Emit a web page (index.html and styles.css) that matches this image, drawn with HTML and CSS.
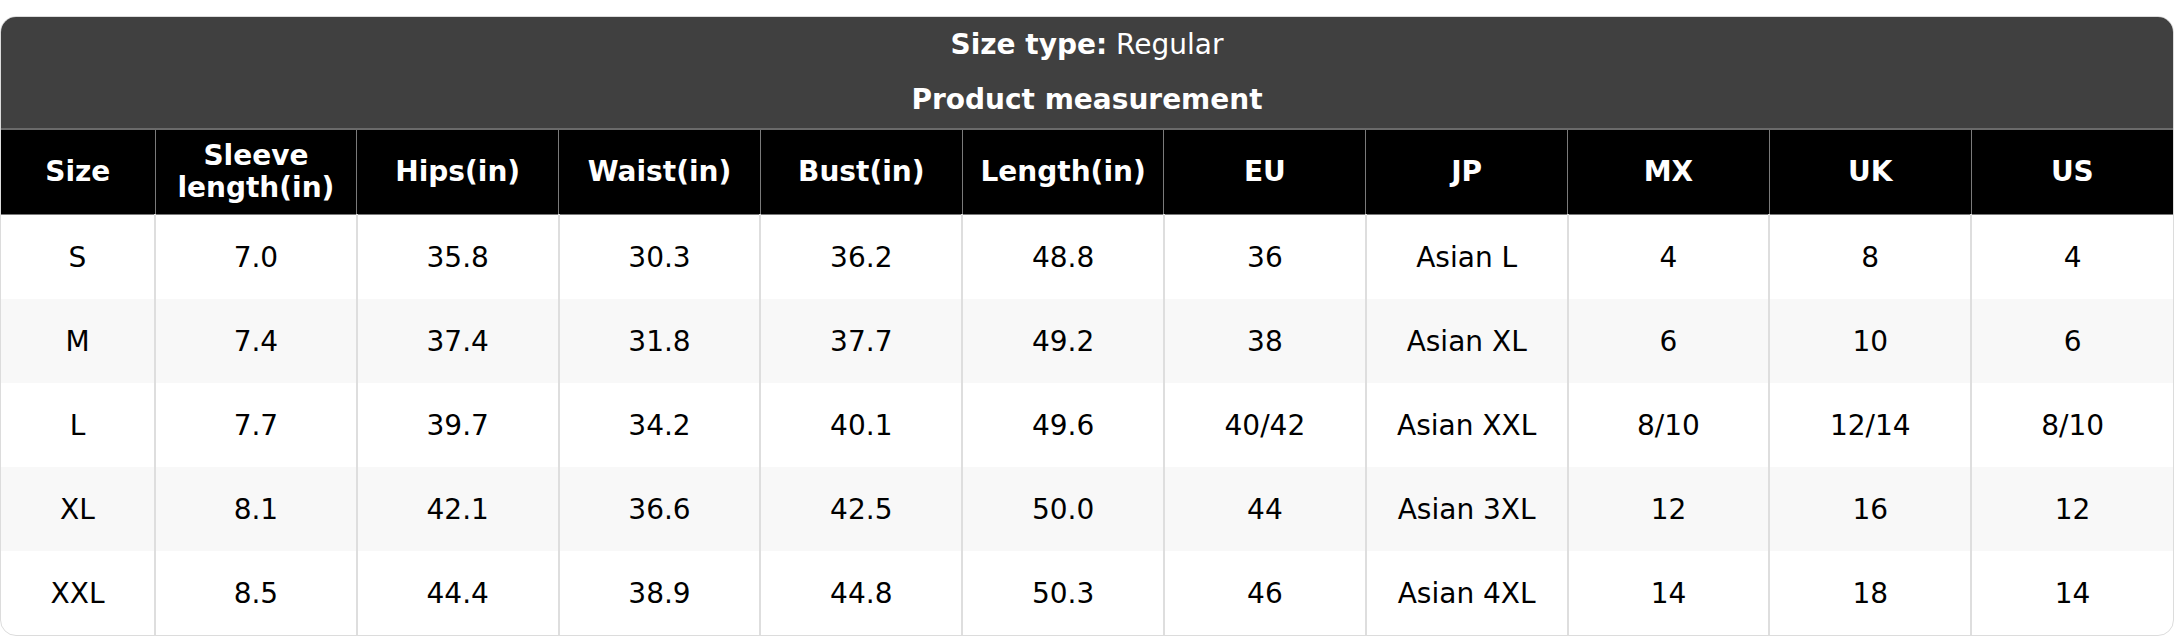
FILE: index.html
```html
<!DOCTYPE html>
<html>
<head>
<meta charset="utf-8">
<link rel="stylesheet" href="styles.css">
</head>
<body>
<div class="card">
  <div class="caption">
    <div class="cap-line"><b>Size type:</b> Regular</div>
    <div class="cap-line cap-title">Product measurement</div>
  </div>
  <table class="sizes">
    <colgroup>
      <col class="c-size">
      <col span="10">
    </colgroup>
    <thead>
      <tr>
        <th>Size</th>
        <th>Sleeve<br>length(in)</th>
        <th>Hips(in)</th>
        <th>Waist(in)</th>
        <th>Bust(in)</th>
        <th>Length(in)</th>
        <th>EU</th>
        <th>JP</th>
        <th>MX</th>
        <th>UK</th>
        <th>US</th>
      </tr>
    </thead>
    <tbody>
      <tr><td>S</td><td>7.0</td><td>35.8</td><td>30.3</td><td>36.2</td><td>48.8</td><td>36</td><td>Asian L</td><td>4</td><td>8</td><td>4</td></tr>
      <tr><td>M</td><td>7.4</td><td>37.4</td><td>31.8</td><td>37.7</td><td>49.2</td><td>38</td><td>Asian XL</td><td>6</td><td>10</td><td>6</td></tr>
      <tr><td>L</td><td>7.7</td><td>39.7</td><td>34.2</td><td>40.1</td><td>49.6</td><td>40/42</td><td>Asian XXL</td><td>8/10</td><td>12/14</td><td>8/10</td></tr>
      <tr><td>XL</td><td>8.1</td><td>42.1</td><td>36.6</td><td>42.5</td><td>50.0</td><td>44</td><td>Asian 3XL</td><td>12</td><td>16</td><td>12</td></tr>
      <tr><td>XXL</td><td>8.5</td><td>44.4</td><td>38.9</td><td>44.8</td><td>50.3</td><td>46</td><td>Asian 4XL</td><td>14</td><td>18</td><td>14</td></tr>
    </tbody>
  </table>
</div>
</body>
</html>
```
FILE: styles.css
```css
html, body {
  margin: 0;
  padding: 0;
  background: #fff;
}
body {
  padding-top: 16px;
  font-family: "DejaVu Sans", Verdana, sans-serif;
  font-size: 28px;
  color: #000;
}
.card {
  border: 1px solid #dcdcdc;
  border-radius: 16px;
  overflow: hidden;
  background: #fff;
}
.caption {
  background: #404040;
  color: #fff;
  text-align: center;
}
.cap-line {
  height: 55px;
  line-height: 55px;
}
.cap-title {
  font-weight: bold;
  height: 56px;
}
.sizes {
  width: 100%;
  border-collapse: collapse;
  table-layout: fixed;
}
.c-size {
  width: 154px;
}
.sizes th {
  background: #000;
  color: #fff;
  font-weight: bold;
  height: 84px;
  line-height: 32px;
  padding: 0 4px;
  border: 1px solid #7a7a7a;
  border-top: 2px solid #6a6a6a;
}
.sizes td {
  height: 84px;
  text-align: center;
  padding: 0 4px;
  border-left: 2px solid #dedede;
  border-right: 2px solid #dedede;
}
.sizes tr > :first-child {
  border-left: none;
}
.sizes tr > :last-child {
  border-right: none;
}
.sizes tbody tr:nth-child(even) td {
  background: #f8f8f8;
}
```
